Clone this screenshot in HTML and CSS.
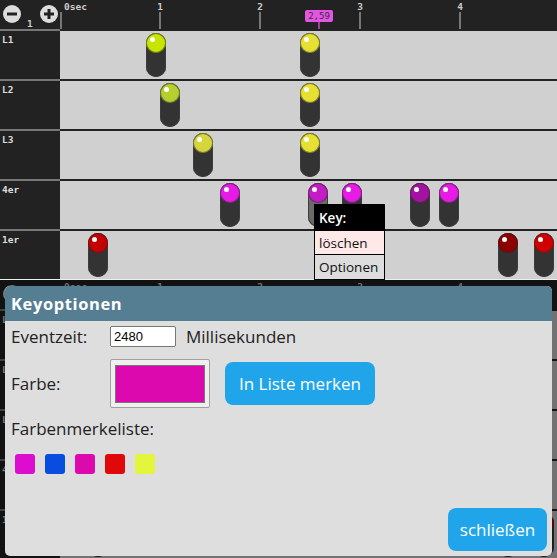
FILE: index.html
```html
<!DOCTYPE html>
<html lang="de">
<head>
<meta charset="utf-8">
<title>Keyoptionen</title>
<link rel="stylesheet" href="styles.css">
</head>
<body>
<div class="app">
  <div class="timeline">
    <div class="row head">
      <div class="side tools">
        <svg class="zoom-btn" width="18" height="18" viewBox="0 0 18 18"><circle cx="9" cy="9" r="9" fill="#ddd"/><path d="M4 9h10" stroke="#222" stroke-width="3"/></svg>
        <span class="zoomval">1</span>
        <svg class="zoom-btn plus" width="18" height="18" viewBox="0 0 18 18"><circle cx="9" cy="9" r="9" fill="#ddd"/><path d="M4 9h10M9 4v10" stroke="#222" stroke-width="3"/></svg>
      </div>
      <div class="ruler">
        <span class="tick" style="left:0px"></span><span class="tlabel first">0sec</span>
        <span class="tick" style="left:99px"></span><span class="tlabel" style="left:100px">1</span>
        <span class="tick" style="left:199px"></span><span class="tlabel" style="left:200px">2</span>
        <span class="tick" style="left:299px"></span><span class="tlabel" style="left:300px">3</span>
        <span class="tick" style="left:399px"></span><span class="tlabel" style="left:400px">4</span>
        <span class="cursor" style="left:245px">2,59</span><span class="cursor-tick" style="left:258px"></span>
      </div>
    </div>
    <div class="row">
      <div class="side"><span class="name">L1</span></div>
      <div class="lane">
        <div class="pin" style="left:86px"><span class="ball" style="background:#c6e500"></span></div>
        <div class="pin" style="left:240px"><span class="ball" style="background:#e6e032"></span></div>
      </div>
    </div>
    <div class="row">
      <div class="side"><span class="name">L2</span></div>
      <div class="lane">
        <div class="pin" style="left:100px"><span class="ball" style="background:#b6cf2e"></span></div>
        <div class="pin" style="left:240px"><span class="ball" style="background:#e6e032"></span></div>
      </div>
    </div>
    <div class="row">
      <div class="side"><span class="name">L3</span></div>
      <div class="lane">
        <div class="pin" style="left:133px"><span class="ball" style="background:#d6d63c"></span></div>
        <div class="pin" style="left:240px"><span class="ball" style="background:#e6e032"></span></div>
      </div>
    </div>
    <div class="row">
      <div class="side"><span class="name">4er</span></div>
      <div class="lane">
        <div class="pin" style="left:160px"><span class="ball" style="background:#e61ce6"></span></div>
        <div class="pin selected" style="left:248px"><span class="ball" style="background:#c41cc4"></span></div>
        <div class="pin" style="left:282px"><span class="ball" style="background:#e61ce6"></span></div>
        <div class="pin" style="left:350px"><span class="ball" style="background:#a412a4"></span></div>
        <div class="pin" style="left:379px"><span class="ball" style="background:#e61ce6"></span></div>
      </div>
    </div>
    <div class="row last">
      <div class="side"><span class="name">1er</span></div>
      <div class="lane">
        <div class="pin" style="left:28px"><span class="ball" style="background:#c40000"></span></div>
        <div class="pin" style="left:438px"><span class="ball" style="background:#8e0000"></span></div>
        <div class="pin" style="left:474px"><span class="ball" style="background:#d00000"></span></div>
      </div>
    </div>
    <div class="menu">
      <div class="menu-head">Key:</div>
      <div class="menu-item danger">löschen</div>
      <div class="menu-item">Optionen</div>
    </div>
  </div>
  <div class="sep"></div>
  <div class="lower">
    <div class="timeline copy">
      <div class="row head">
        <div class="side tools">
          <svg class="zoom-btn" width="18" height="18" viewBox="0 0 18 18"><circle cx="9" cy="9" r="9" fill="#ddd"/><path d="M4 9h10" stroke="#222" stroke-width="3"/></svg>
        </div>
        <div class="ruler">
          <span class="tick" style="left:0px"></span><span class="tlabel first">0sec</span>
          <span class="tick" style="left:99px"></span><span class="tlabel" style="left:100px">1</span>
          <span class="tick" style="left:199px"></span><span class="tlabel" style="left:200px">2</span>
          <span class="tick" style="left:299px"></span><span class="tlabel" style="left:300px">3</span>
          <span class="tick" style="left:399px"></span><span class="tlabel" style="left:400px">4</span>
        </div>
      </div>
      <div class="row">
        <div class="side"><span class="name">L1</span></div>
        <div class="lane">
          <div class="pin" style="left:86px"><span class="ball" style="background:#c6e500"></span></div>
          <div class="pin" style="left:240px"><span class="ball" style="background:#e6e032"></span></div>
        </div>
      </div>
      <div class="row">
        <div class="side"><span class="name">L2</span></div>
        <div class="lane">
          <div class="pin" style="left:100px"><span class="ball" style="background:#b6cf2e"></span></div>
          <div class="pin" style="left:240px"><span class="ball" style="background:#e6e032"></span></div>
        </div>
      </div>
      <div class="row">
        <div class="side"><span class="name">L3</span></div>
        <div class="lane">
          <div class="pin" style="left:133px"><span class="ball" style="background:#d6d63c"></span></div>
          <div class="pin" style="left:240px"><span class="ball" style="background:#e6e032"></span></div>
        </div>
      </div>
      <div class="row">
        <div class="side"><span class="name">4er</span></div>
        <div class="lane">
          <div class="pin" style="left:160px"><span class="ball" style="background:#e61ce6"></span></div>
          <div class="pin" style="left:248px"><span class="ball" style="background:#e61ce6"></span></div>
          <div class="pin" style="left:282px"><span class="ball" style="background:#e61ce6"></span></div>
          <div class="pin" style="left:350px"><span class="ball" style="background:#a412a4"></span></div>
          <div class="pin" style="left:379px"><span class="ball" style="background:#e61ce6"></span></div>
        </div>
      </div>
      <div class="row last">
        <div class="side"><span class="name">1er</span></div>
        <div class="lane">
          <div class="pin" style="left:28px"><span class="ball" style="background:#c40000"></span></div>
          <div class="pin" style="left:438px"><span class="ball" style="background:#8e0000"></span></div>
          <div class="pin" style="left:474px"><span class="ball" style="background:#d00000"></span></div>
        </div>
      </div>
    </div>
    <div class="shade"></div>
    <div class="dialog">
      <div class="dialog-title">Keyoptionen</div>
      <div class="dialog-body">
        <div class="field">
          <span class="label">Eventzeit:</span>
          <input class="num" type="text" value="2480">
          <span class="unit">Millisekunden</span>
        </div>
        <div class="field color-row">
          <span class="label">Farbe:</span>
          <div class="colorpick"><div class="colorfill"></div></div>
          <button class="btn remember">In Liste merken</button>
        </div>
        <div class="list-title">Farbenmerkeliste:</div>
        <div class="swatches">
          <span class="swatch" style="background:#dc0cd0"></span>
          <span class="swatch" style="background:#0a4be0"></span>
          <span class="swatch" style="background:#dc0aae"></span>
          <span class="swatch" style="background:#e00808"></span>
          <span class="swatch" style="background:#e3f53d"></span>
        </div>
        <button class="btn close">schließen</button>
      </div>
    </div>
  </div>
</div>
</body>
</html>
```

FILE: styles.css
```css
* { box-sizing: border-box; }
html, body { margin: 0; padding: 0; }
body {
  width: 557px;
  height: 558px;
  overflow: hidden;
  background: #111;
  font-family: "Open Sans", "Noto Sans", sans-serif;
}
.app { display: flex; flex-direction: column; height: 558px; }

.timeline { position: relative; display: flex; flex-direction: column; flex: none; }
.row { display: flex; height: 50px; }
.row.head { height: 31px; }
.row.last { height: 48px; }
.side {
  width: 60px;
  flex: none;
  background: #222;
  border-bottom: 2px solid #777;
  padding: 4px 0 0 2px;
}
.row.last .side, .row.last .lane { border-bottom: 0; }
.name {
  font-family: "DejaVu Sans Mono", monospace;
  font-weight: bold;
  font-size: 9.5px;
  line-height: 10px;
  color: #ddd;
  display: block;
}
.lane {
  flex: 1;
  position: relative;
  background: #d0d0d0;
  border-bottom: 2px solid #222;
}
.tools { display: flex; align-items: flex-start; padding: 5px 0 0 3px; }
.zoom-btn { display: block; }
.zoomval {
  font-family: "DejaVu Sans Mono", monospace;
  font-weight: bold;
  font-size: 9.5px;
  line-height: 10px;
  color: #ccc;
  margin: 14px 7px 0 6px;
}
.ruler {
  flex: 1;
  position: relative;
  background: #222;
  border-bottom: 2px solid #222;
}
.tick { position: absolute; top: 12px; width: 2px; height: 17px; background: #777; }
.tlabel {
  position: absolute;
  top: 1px;
  transform: translateX(-50%);
  font-family: "DejaVu Sans Mono", monospace;
  font-weight: bold;
  font-size: 9.5px;
  line-height: 11px;
  color: #ccc;
}
.tlabel.first { left: 4px; transform: none; }
.cursor {
  position: absolute;
  top: 10px;
  width: 28px;
  height: 12px;
  border-radius: 2px;
  background: #e455e4;
  color: #333;
  font-family: "DejaVu Sans Mono", monospace;
  font-size: 9px;
  line-height: 12px;
  text-align: center;
}
.cursor-tick { position: absolute; top: 22px; width: 2px; height: 7px; background: #a040a0; }

.pin {
  position: absolute;
  top: 2px;
  width: 20px;
  height: 44px;
  border-radius: 10px;
  background: #333;
  box-shadow: inset 0 0 0 1px #3c3c3c;
}
.pin.selected { background: #6a6a6a; }
.ball {
  position: absolute;
  left: 0;
  top: 0;
  width: 20px;
  height: 20px;
  border-radius: 50%;
  box-shadow: inset 0 0 0 1px rgba(40, 40, 40, 0.55);
}
.ball::after {
  content: "";
  position: absolute;
  left: 4px;
  top: 4px;
  width: 5px;
  height: 5px;
  border-radius: 50%;
  background: #fff;
}

.menu {
  position: absolute;
  left: 314px;
  top: 204px;
  width: 71px;
  border: 1px solid #000;
  font-family: "Open Sans", "Noto Sans", sans-serif;
  font-size: 13.5px;
  line-height: 18px;
  z-index: 2;
}
.menu-head {
  height: 25px;
  background: #000;
  color: #fff;
  font-weight: 600;
  padding: 4px 0 0 4px;
}
.menu-item {
  height: 25px;
  background: #ddd;
  color: #111;
  border-top: 1px solid #000;
  padding: 3px 0 0 4px;
}
.menu-item.danger { background: #ffe8e8; height: 24px; }

.sep { height: 1px; background: #eee; flex: none; }

.lower { position: relative; flex: 1; overflow: hidden; }
.shade { position: absolute; inset: 0; background: rgba(0, 0, 0, 0.45); }

.dialog {
  position: absolute;
  left: 5px;
  top: 6px;
  width: 547px;
  height: 270px;
  border-radius: 5px;
  overflow: hidden;
  background: #dedede;
  display: flex;
  flex-direction: column;
}
.dialog-title {
  height: 35px;
  flex: none;
  background: #567e93;
  color: #fff;
  font-weight: bold;
  font-size: 16.5px;
  letter-spacing: 0.6px;
  line-height: 35px;
  padding-left: 6px;
}
.dialog-body {
  flex: 1;
  display: flex;
  flex-direction: column;
  padding: 0 5px 5px 6px;
  color: #222;
  font-size: 17px;
}
.field { display: flex; align-items: center; }
.field:first-child { margin-top: 5px; height: 21px; }
.label { width: 99px; flex: none; }
.num {
  width: 66px;
  height: 21px;
  border: 1px solid #767676;
  border-radius: 2px;
  background: #fff;
  font-family: "Liberation Sans", sans-serif;
  font-size: 13px;
  padding: 0 3px;
  color: #000;
}
.unit { margin-left: 10px; }
.color-row { margin-top: 12px; height: 49px; }
.colorpick {
  width: 100px;
  height: 49px;
  border: 1px solid #a0a0a0;
  border-radius: 2px;
  background: #efefef;
  padding: 5px 4px 4px 4px;
}
.colorfill {
  width: 100%;
  height: 100%;
  border: 1px solid #777;
  background: #dc0aae;
}
.btn {
  border: 0;
  border-radius: 8px;
  background: #21a5ea;
  color: #fff;
  font-family: "Open Sans", "Noto Sans", sans-serif;
  font-size: 17px;
  padding: 0;
}
.remember { margin-left: 15px; width: 150px; height: 43px; }
.list-title { margin-top: 9px; }
.swatches { display: flex; gap: 10px; margin: 14px 0 0 4px; }
.swatch { width: 20px; height: 20px; border-radius: 3px; }
.close { margin-top: auto; align-self: flex-end; width: 99px; height: 43px; }
```
